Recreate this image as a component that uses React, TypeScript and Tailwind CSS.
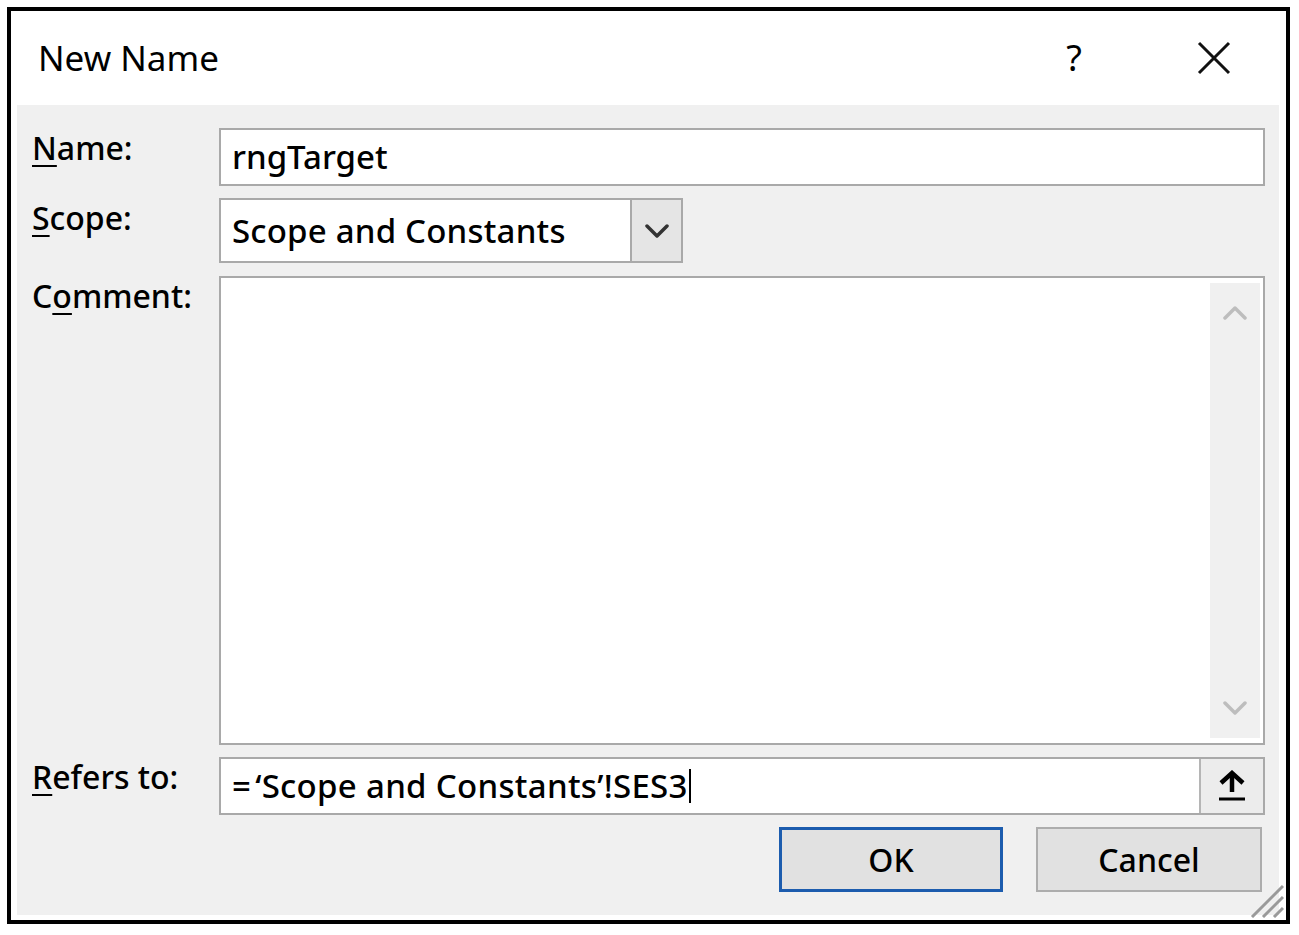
import React from 'react';

const FONT = { fontFamily: '"Noto Sans", "Open Sans", sans-serif' };

const Key = ({ children }: { children: React.ReactNode }) => (
  <span className="underline decoration-[2px] underline-offset-[5px]">{children}</span>
);

const Label = ({ children }: { children: React.ReactNode }) => (
  <div className="text-[32px] leading-[40px] text-black font-medium">{children}</div>
);

const Chevron = ({ up, color, size = 24 }: { up?: boolean; color: string; size?: number }) => (
  <svg width={size} height={size / 2 + 4} viewBox="0 0 24 16" fill="none">
    <path
      d={up ? 'M2 13 L12 3 L22 13' : 'M2 3 L12 13 L22 3'}
      stroke={color}
      strokeWidth="3.5"
      strokeLinecap="round"
      strokeLinejoin="round"
    />
  </svg>
);

export default function App() {
  return (
    <div className="w-[1299px] h-[935px] bg-white overflow-hidden" style={FONT}>
      <div className="relative ml-[7px] mt-[7px] w-[1283px] h-[917px] border-4 border-black bg-white flex flex-col pl-[6px] pr-[7px] pb-[5px]">
        {/* title bar */}
        <div className="h-[94px] flex items-center pl-[21px] pr-[40px]">
          <div className="flex-1 text-[35px] text-black">New Name</div>
          <div className="w-[30px] text-center text-[36px] text-black mr-[108px]">?</div>
          <svg width="34" height="34" viewBox="0 0 34 34" className="mr-[8px]">
            <path d="M2 2 L32 32 M32 2 L2 32" stroke="#111" strokeWidth="3" />
          </svg>
        </div>

        {/* body */}
        <div className="flex-1 bg-[#f0f0f0] pl-[15px] pr-[14px] pt-[23px]">
          <div className="grid grid-cols-[187px_1fr] gap-y-[12px]">
            <Label>
              <Key>N</Key>ame:
            </Label>
            <div className="h-[58px] border-2 border-[#a9a9a9] bg-white flex items-center pl-[11px] text-[33px] font-medium text-black">
              rngTarget
            </div>

            <Label>
              <Key>S</Key>cope:
            </Label>
            <div className="h-[65px] w-[464px] border-2 border-[#a9a9a9] bg-white flex">
              <div className="flex-1 flex items-center pl-[11px] text-[33px] font-medium text-black tracking-[0.2px]">Scope and Constants</div>
              <div className="w-[51px] border-l-2 border-[#a9a9a9] bg-[#e5e5e5] flex items-center justify-center">
                <Chevron color="#333" size={24} />
              </div>
            </div>

            <div className="mt-[1px]">
              <Label>
                C<Key>o</Key>mment:
              </Label>
            </div>
            <div className="mt-[1px] h-[469px] border-2 border-[#a9a9a9] bg-white flex justify-end">
              <div className="w-[50px] my-[5px] mr-[3px] bg-[#f0f0f0] flex flex-col items-center justify-between py-[22px]">
                <Chevron up color="#bdbdbd" size={24} />
                <Chevron color="#bdbdbd" size={24} />
              </div>
            </div>

            <Label>
              <Key>R</Key>efers to:
            </Label>
            <div className="h-[58px] border-2 border-[#a9a9a9] bg-white flex">
              <div className="flex-1 flex items-center pl-[11px] text-[33px] font-medium text-black tracking-[0.3px]">
                <span className="mr-[4px]">=</span>‘Scope and Constants’!SES3
                <span className="inline-block w-[2px] h-[34px] bg-black ml-[1px]" />
              </div>
              <div className="w-[64px] border-l-2 border-[#b5b5b5] bg-[#ececec] flex items-center justify-center">
                <svg width="30" height="32" viewBox="0 0 30 32" fill="none">
                  <path d="M4 13 L15 3 L26 13" stroke="#000" strokeWidth="4.5" strokeLinejoin="miter" />
                  <path d="M15 4 V22" stroke="#000" strokeWidth="4.5" />
                  <path d="M2 29 H28" stroke="#000" strokeWidth="3" />
                </svg>
              </div>
            </div>

            <div />
            <div className="flex justify-end gap-[33px] pr-[3px]">
              <button className="w-[224px] h-[65px] border-[3px] border-[#1c5cae] bg-[#e1e1e1] text-[32px] font-medium text-black">
                OK
              </button>
              <button className="w-[226px] h-[65px] border-2 border-[#adadad] bg-[#e1e1e1] text-[32px] font-medium text-black">
                Cancel
              </button>
            </div>
          </div>
        </div>

        {/* resize grip */}
        <svg width="36" height="36" viewBox="0 0 36 36" className="absolute right-[2px] bottom-[2px]">
          <path d="M35 4 L4 35 M35 15 L15 35 M35 26 L26 35" stroke="#9a9a9a" strokeWidth="3" />
        </svg>
      </div>
    </div>
  );
}
